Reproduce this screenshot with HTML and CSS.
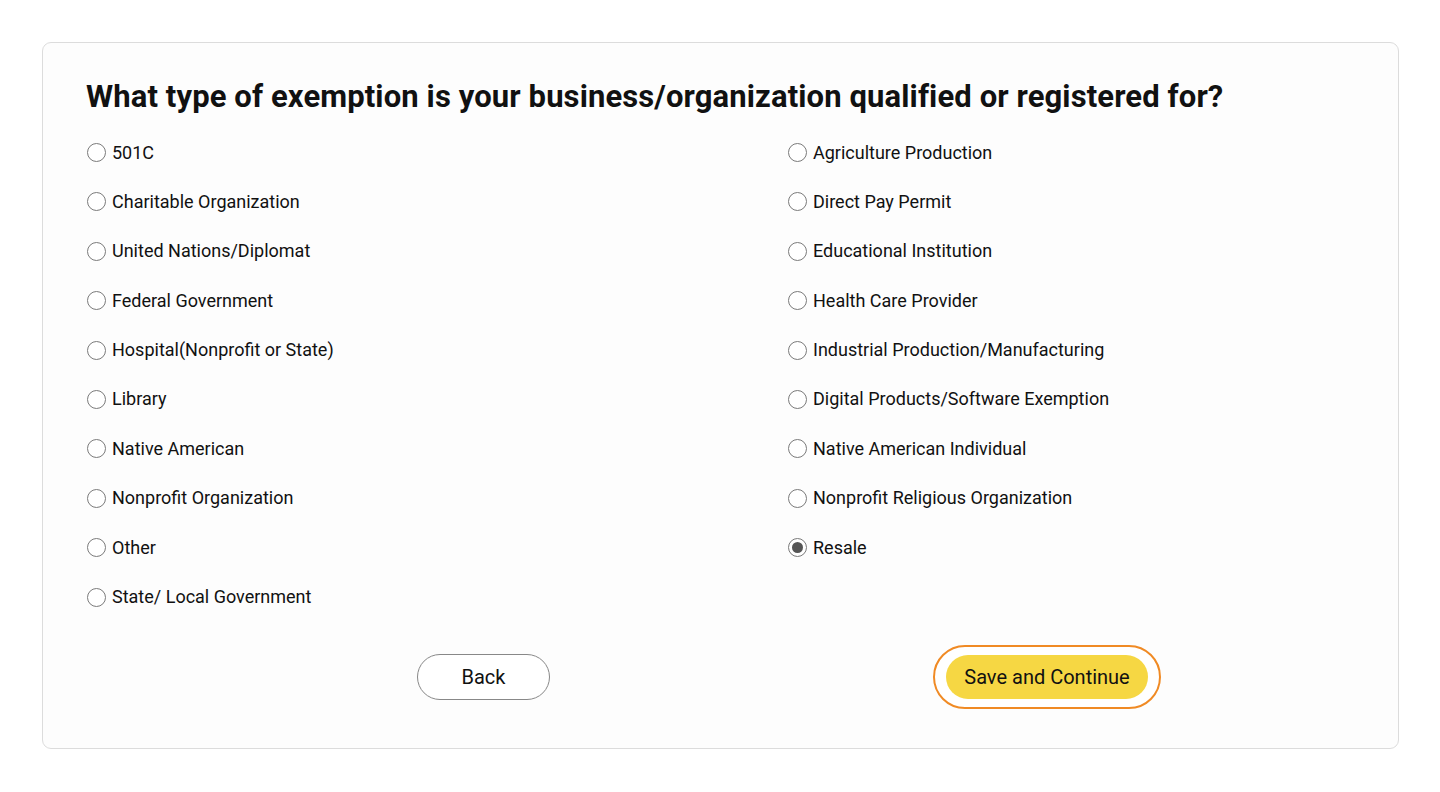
FILE: index.html
```html
<!DOCTYPE html>
<html lang="en">
<head>
<meta charset="utf-8">
<title>Exemption type</title>
<link rel="stylesheet" href="styles.css">
</head>
<body>
<main class="card">
  <h1 class="title">What type of exemption is your business/organization qualified or registered for?</h1>
  <div class="options">
    <div class="col">
      <label class="opt"><span class="radio"></span><span>501C</span></label>
      <label class="opt"><span class="radio"></span><span>Charitable Organization</span></label>
      <label class="opt"><span class="radio"></span><span>United Nations/Diplomat</span></label>
      <label class="opt"><span class="radio"></span><span>Federal Government</span></label>
      <label class="opt"><span class="radio"></span><span>Hospital(Nonprofit or State)</span></label>
      <label class="opt"><span class="radio"></span><span>Library</span></label>
      <label class="opt"><span class="radio"></span><span>Native American</span></label>
      <label class="opt"><span class="radio"></span><span>Nonprofit Organization</span></label>
      <label class="opt"><span class="radio"></span><span>Other</span></label>
      <label class="opt"><span class="radio"></span><span>State/ Local Government</span></label>
    </div>
    <div class="col">
      <label class="opt"><span class="radio"></span><span>Agriculture Production</span></label>
      <label class="opt"><span class="radio"></span><span>Direct Pay Permit</span></label>
      <label class="opt"><span class="radio"></span><span>Educational Institution</span></label>
      <label class="opt"><span class="radio"></span><span>Health Care Provider</span></label>
      <label class="opt"><span class="radio"></span><span>Industrial Production/Manufacturing</span></label>
      <label class="opt"><span class="radio"></span><span>Digital Products/Software Exemption</span></label>
      <label class="opt"><span class="radio"></span><span>Native American Individual</span></label>
      <label class="opt"><span class="radio"></span><span>Nonprofit Religious Organization</span></label>
      <label class="opt"><span class="radio checked"></span><span>Resale</span></label>
    </div>
  </div>
  <div class="actions">
    <button class="btn-back" type="button">Back</button>
    <span class="focus-ring"><button class="btn-primary" type="button">Save and Continue</button></span>
  </div>
</main>
</body>
</html>
```
FILE: styles.css
```css
* { box-sizing: border-box; }
html, body { margin: 0; padding: 0; background: #ffffff; }
body {
  font-family: Roboto, "Liberation Sans", sans-serif;
  color: #111111;
  padding: 42px 41px 0 42px;
}
.card {
  width: 1357px;
  height: 707px;
  border: 1px solid #dcdcdc;
  border-radius: 9px;
  background: #fdfdfd;
  padding: 32px 43px 0 43px;
}
.title {
  margin: 0;
  font-size: 31px;
  line-height: 44px;
  font-weight: 700;
  letter-spacing: 0.11px;
}
.options {
  display: grid;
  grid-template-columns: 701px 1fr;
  margin-top: 21.5px;
}
.col {
  display: flex;
  flex-direction: column;
  gap: 25.4px;
}
.opt {
  display: flex;
  align-items: center;
  height: 24px;
  font-size: 18px;
  line-height: 24px;
}
.radio {
  width: 19px;
  height: 19px;
  border: 1.5px solid #7a7a7a;
  border-radius: 50%;
  background: #fff;
  margin-left: 1px;
  margin-right: 6px;
  flex: none;
  display: flex;
  align-items: center;
  justify-content: center;
}
.radio.checked::after {
  content: "";
  width: 11px;
  height: 11px;
  border-radius: 50%;
  background: #555;
}
.actions {
  display: flex;
  align-items: center;
  margin-top: 35.5px;
  padding-left: 331px;
  gap: 383px;
}
.btn-back {
  width: 133px;
  height: 46px;
  border: 1px solid #888;
  border-radius: 23px;
  background: #fff;
  font-family: inherit;
  font-size: 20px;
  color: #111111;
}
.focus-ring {
  display: inline-flex;
  padding: 8px 11px;
  border: 2px solid #f08a24;
  border-radius: 32px;
  background: #fff;
}
.btn-primary {
  width: 202px;
  height: 44px;
  border: none;
  border-radius: 22px;
  background: #f6d743;
  font-family: inherit;
  font-size: 20px;
  color: #111111;
}
```
